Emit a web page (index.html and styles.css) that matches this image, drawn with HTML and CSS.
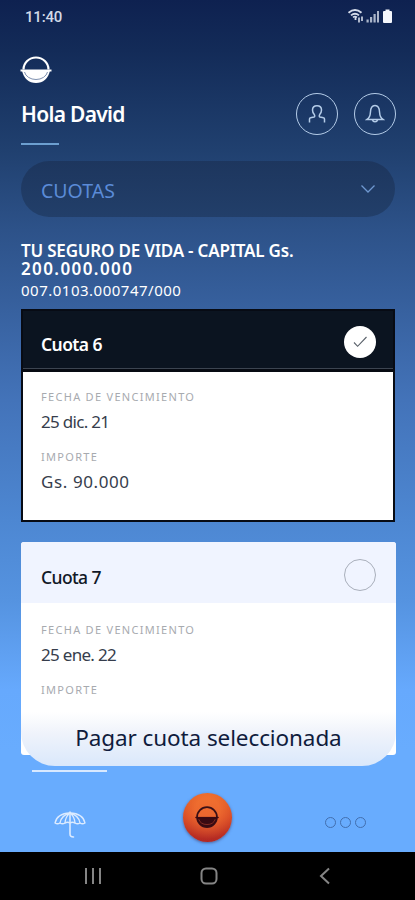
FILE: index.html
```html
<!DOCTYPE html>
<html lang="es">
<head>
    <meta charset="UTF-8">
    <meta name="viewport" content="width=device-width, initial-scale=1">
    <title>Cuotas</title>
    <link rel="stylesheet" href="styles.css">
</head>
<body>
    <div class="app">
        <div class="status-bar">
            <span class="hora">11:40</span>
            <svg class="status-icons" width="46" height="16" viewBox="0 0 46 16">
                <g fill="none" stroke="#d5dcea">
                    <path d="M.5 4.800q6.500-5.500 13 0" stroke-width="2"/>
                    <path d="M3 7.400q4-3.400 8 0" stroke-width="1.800"/>
                    <path d="M5 9.400q2-1.800 4 0" stroke-width="1.600"/>
                    <path d="M7.500 9v3" stroke-width="1.800"/>
                    <path d="M11 14.500v-5M14 8.500v4.500" stroke-width="1.600"/>
                </g>
                <path d="M18.500 14.500v-3h2.200v3zM22 14.500V9h2.200v5.500zM25.500 14.500V6h2.200v8.500z" fill="#aab5ca"/>
                <path d="M29.200 14.500V3h1.600v11.500z" fill="#d5dcea"/>
                <path d="M37.500 1.500h4V3H43q1 0 1 1V14q0 1-1 1h-7q-1 0-1-1V4q0-1 1-1h1.500z" fill="#f5f7fc"/>
            </svg>
        </div>

        <div class="header">
            <svg class="logo" width="32" height="30" viewBox="0 0 32 30">
                <path d="M3.500 14.500a12.500 12 0 0 1 25 0" fill="none" stroke="#fff" stroke-width="2.200"/>
                <path d="M2 15.500h28C28.500 23.500 23 28 16 28S3.500 23.500 2 15.500z" fill="#fff"/>
                <path d="M.5 15.500h31" stroke="#fff" stroke-width="2"/>
                <path d="M4.500 17a11.700 9.200 0 0 0 23 0" fill="none" stroke="#6f83a6" stroke-width=".9"/>
            </svg>
            <div class="saludo">
                <h1>Hola David</h1>
                <div class="acciones">
                    <div class="circulo">
                        <svg width="20" height="22" viewBox="0 0 20 22">
                            <path d="M2.500 19.500v-3.500q0-1 1-1.200l3.500-.8q1.300-.6.300-2.400Q5.500 9.500 5.500 7q0-4.300 4.500-4.300T14.500 7q0 2.500-1.800 4.600-1 1.800.3 2.400l3.500.8q1 .2 1 1.200v3.500"/>
                        </svg>
                    </div>
                    <div class="circulo">
                        <svg width="20" height="22" viewBox="0 0 20 22">
                            <path d="M2 16.500q3.200-2.100 3.400-7Q5.600 2.500 10 2.500t4.600 7q.2 4.900 3.400 7zM7.500 17q.5 1.800 2.500 1.800t2.500-1.800"/>
                        </svg>
                    </div>
                </div>
            </div>
            <div class="linea"></div>
        </div>

        <div class="selector">
            <span>CUOTAS</span>
            <svg width="16" height="10" viewBox="0 0 16 10">
                <path d="M1.500 1.500L8 8l6.500-6.500" fill="none" stroke="#6f98d0" stroke-width="1.300"/>
            </svg>
        </div>

        <div class="poliza">
            <h2><span class="producto">TU SEGURO DE VIDA - CAPITAL Gs.</span><br><span class="capital">200.000.000</span></h2>
            <p>007.0103.000747/000</p>
        </div>

        <div class="cuotas">
            <div class="cuota activa">
                <div class="cuota-titulo">
                    <h3>Cuota 6</h3>
                    <div class="check">
                        <svg width="16" height="14" viewBox="0 0 16 14">
                            <path d="M2 7.500l3.600 3.800L14.500 2" fill="none" stroke="#59616a" stroke-width="1.100"/>
                        </svg>
                    </div>
                </div>
                <div class="cuota-datos">
                    <div class="etiqueta">FECHA DE VENCIMIENTO</div>
                    <div class="valor fecha">25 dic. 21</div>
                    <div class="etiqueta">IMPORTE</div>
                    <div class="valor importe">Gs. 90.000</div>
                </div>
            </div>

            <div class="cuota">
                <div class="cuota-titulo">
                    <h3>Cuota 7</h3>
                    <div class="check"></div>
                </div>
                <div class="cuota-datos">
                    <div class="etiqueta">FECHA DE VENCIMIENTO</div>
                    <div class="valor fecha">25 ene. 22</div>
                    <div class="etiqueta">IMPORTE</div>
                </div>
                <div class="pagar"><span>Pagar cuota seleccionada</span></div>
            </div>
        </div>

        <div class="menu">
            <div class="menu-item seleccionado">
                <svg width="34" height="30" viewBox="0 0 34 30">
                    <g fill="none" stroke="#dcebff" stroke-width="1.300" stroke-linecap="round">
                        <path d="M2 14Q4 4.500 17 4 30 4.500 32 14q-2.500 1.500-5 0-2.500 1.500-5 0-2.500-1.500-5 0-2.500-1.500-5 0-2.500 1.500-5 0-2.500 1.500-5 0z"/>
                        <path d="M7 14q1-7.500 10-10 9 2.500 10 10M12 14q.3-6 5-10 4.700 4 5 10"/>
                        <path d="M17 3V25q0 3 3.500 3" stroke-width="1.600"/>
                    </g>
                </svg>
            </div>
            <div class="boton-central">
                <svg width="26" height="25" viewBox="0 0 30 28">
                    <circle cx="15" cy="13.500" r="11.500" fill="none" stroke="#3a1016" stroke-width="2"/>
                    <path d="M3.500 14h23a11.500 11 0 0 1-23 0z" fill="#3a0a12"/>
                    <path d="M1.500 14h27" stroke="#3a0a12" stroke-width="1.400"/>
                    <path d="M5.500 16a9.900 8.500 0 0 0 19 0" fill="none" stroke="#a23a28" stroke-width=".8"/>
                </svg>
            </div>
            <div class="menu-item puntos"><i></i><i></i><i></i></div>
        </div>

        <div class="nav-android">
            <svg width="18" height="18" viewBox="0 0 18 18"><path d="M2 1v16M9 1v16M16 1v16"/></svg>
            <svg width="18" height="18" viewBox="0 0 18 18"><rect x="1.500" y="1.500" width="15" height="15" rx="4.500"/></svg>
            <svg width="18" height="18" viewBox="0 0 18 18"><path d="M13 1.500L5 9l8 7.500"/></svg>
        </div>
    </div>
</body>
</html>
```

FILE: styles.css
```css
* {
    box-sizing: border-box;
}
body {
    margin: 0;
    font-family: "Noto Sans", sans-serif;
    color: #fff;
}
h1, h2, h3, p {
    margin: 0;
}
svg {
    display: block;
}
.app {
    width: 415px;
    height: 900px;
    overflow: hidden;
    display: flex;
    flex-direction: column;
    background: linear-gradient(#0e2150 0, #132b58 50px, #20406f 150px, #2d5289 230px, #365f9c 300px, #4373b9 400px, #4d87d2 520px, #5593e0 600px, #66a9fd 690px, #68acfe 750px);
}
.status-bar {
    height: 34px;
    padding: 8px 21px 0 25px;
    display: flex;
    justify-content: space-between;
}
.hora {
    font-family: Roboto, sans-serif;
    font-size: 15px;
    font-weight: 500;
    line-height: 19px;
    letter-spacing: -0.2px;
    color: #d3dae8;
}
.header {
    height: 127px;
    padding: 21px 19px 0 20px;
}
.saludo {
    display: flex;
    justify-content: space-between;
    height: 58px;
    padding: 8px 0 0 1px;
}
.saludo h1 {
    font-size: 21px;
    font-weight: 600;
    line-height: 42px;
    letter-spacing: -0.7px;
}
.acciones {
    display: flex;
    gap: 16px;
}
.circulo {
    width: 42px;
    height: 42px;
    border: 1.500px solid #b4cce8;
    border-radius: 50%;
    display: flex;
    align-items: center;
    justify-content: center;
}
.circulo path {
    fill: none;
    stroke: #b4cce8;
    stroke-width: 1.500;
}
.linea {
    width: 38px;
    height: 2px;
    margin-left: 1px;
    background: #6c9fd0;
}
.selector {
    height: 56px;
    margin: 0 20px 0 21px;
    padding: 2px 19px 0 20px;
    border-radius: 28px;
    background: linear-gradient(#1d365e, #223f6a);
    color: #5b8bd7;
    font-size: 19.500px;
    display: flex;
    align-items: center;
    justify-content: space-between;
}
.selector svg {
    margin-bottom: 2px;
}
.poliza {
    height: 92px;
    padding: 25px 21px 0;
}
.poliza h2 {
    font-size: 17px;
    font-weight: 600;
    line-height: 18px;
    white-space: nowrap;
}
.producto {
    letter-spacing: -0.2px;
}
.capital {
    letter-spacing: 1.400px;
}
.poliza p {
    margin-top: 2px;
    font-size: 15px;
    line-height: 20px;
    letter-spacing: 0.500px;
}
.cuotas {
    padding: 0 19px 0 21px;
}
.cuota {
    position: relative;
    height: 213px;
    background: #fff;
    border-radius: 3px;
    color: #363d4c;
}
.cuota-titulo {
    height: 61px;
    padding: 8px 20px 0 20px;
    background: #f0f4ff;
    border-radius: 3px 3px 0 0;
    display: flex;
    align-items: center;
    justify-content: space-between;
}
.cuota-titulo h3 {
    color: #111827;
    font-size: 17.500px;
    font-weight: 500;
    line-height: 24px;
    letter-spacing: -0.600px;
}
.check {
    width: 32px;
    height: 32px;
    margin-bottom: 3px;
    border: 1.500px solid #a9afbb;
    border-radius: 50%;
    display: flex;
    align-items: center;
    justify-content: center;
}
.cuota-datos {
    padding: 18px 20px 0;
}
.etiqueta {
    color: #a7aaaf;
    font-size: 11px;
    line-height: 18px;
    letter-spacing: 1.300px;
}
.valor {
    height: 42px;
    padding-top: 4px;
    font-size: 17px;
    line-height: 24px;
}
.fecha {
    letter-spacing: -0.700px;
}
.importe {
    letter-spacing: 0.600px;
}
.activa {
    margin-bottom: 20px;
    margin-right: 1px;
    border: 2px solid #070b14;
    border-radius: 0;
}
.activa .cuota-titulo {
    padding: 8px 17px 0 18px;
    background: #0b1420;
    border-radius: 0;
    border-bottom: 3px solid #060a12;
    box-shadow: inset 0 -1px #3c4450;
}
.activa .cuota-titulo h3 {
    color: #fff;
    font-weight: 600;
}
.activa .check {
    border: none;
    margin-bottom: 4px;
    background: #fff;
}
.activa .cuota-datos {
    padding: 16px 18px 0;
}
.pagar {
    position: absolute;
    left: 0;
    right: 0;
    top: 170px;
    height: 54px;
    border-radius: 0 0 34px 34px;
    background: linear-gradient(#fff, #eff3fb 40%, #dae8fb);
    color: #101c3d;
    font-size: 22.500px;
    line-height: 51px;
    letter-spacing: -0.100px;
    text-align: center;
    white-space: nowrap;
}
.menu {
    height: 97px;
    margin-top: auto;
    padding: 15px 33px 0 32px;
    display: flex;
    justify-content: space-between;
    flex-shrink: 0;
}
.menu-item {
    width: 75px;
}
.seleccionado {
    border-top: 2px solid #d8e9ff;
    display: flex;
    justify-content: center;
    padding-top: 37px;
}
.boton-central {
    width: 49px;
    height: 49px;
    margin-top: 23px;
    border-radius: 50%;
    background: radial-gradient(circle at 50% 35%, rgba(240, 110, 50, 0.7) 30%, rgba(190, 45, 30, 0.35) 72%), linear-gradient(#f47b2a, #df5026 50%, #a92426);
    box-shadow: 0 1px 3px rgba(60, 50, 90, 0.6);
    display: flex;
    align-items: center;
    justify-content: center;
}
.puntos {
    display: flex;
    gap: 4px;
    padding: 47px 0 0 18px;
}
.puntos i {
    width: 11px;
    height: 11px;
    border: 1px solid #426fae;
    border-radius: 50%;
}
.nav-android {
    height: 48px;
    flex-shrink: 0;
    padding: 0 81px 0 84px;
    background: #000;
    display: flex;
    align-items: center;
    justify-content: space-between;
}
.nav-android svg {
    fill: none;
    stroke: #858585;
    stroke-width: 2;
}
```
